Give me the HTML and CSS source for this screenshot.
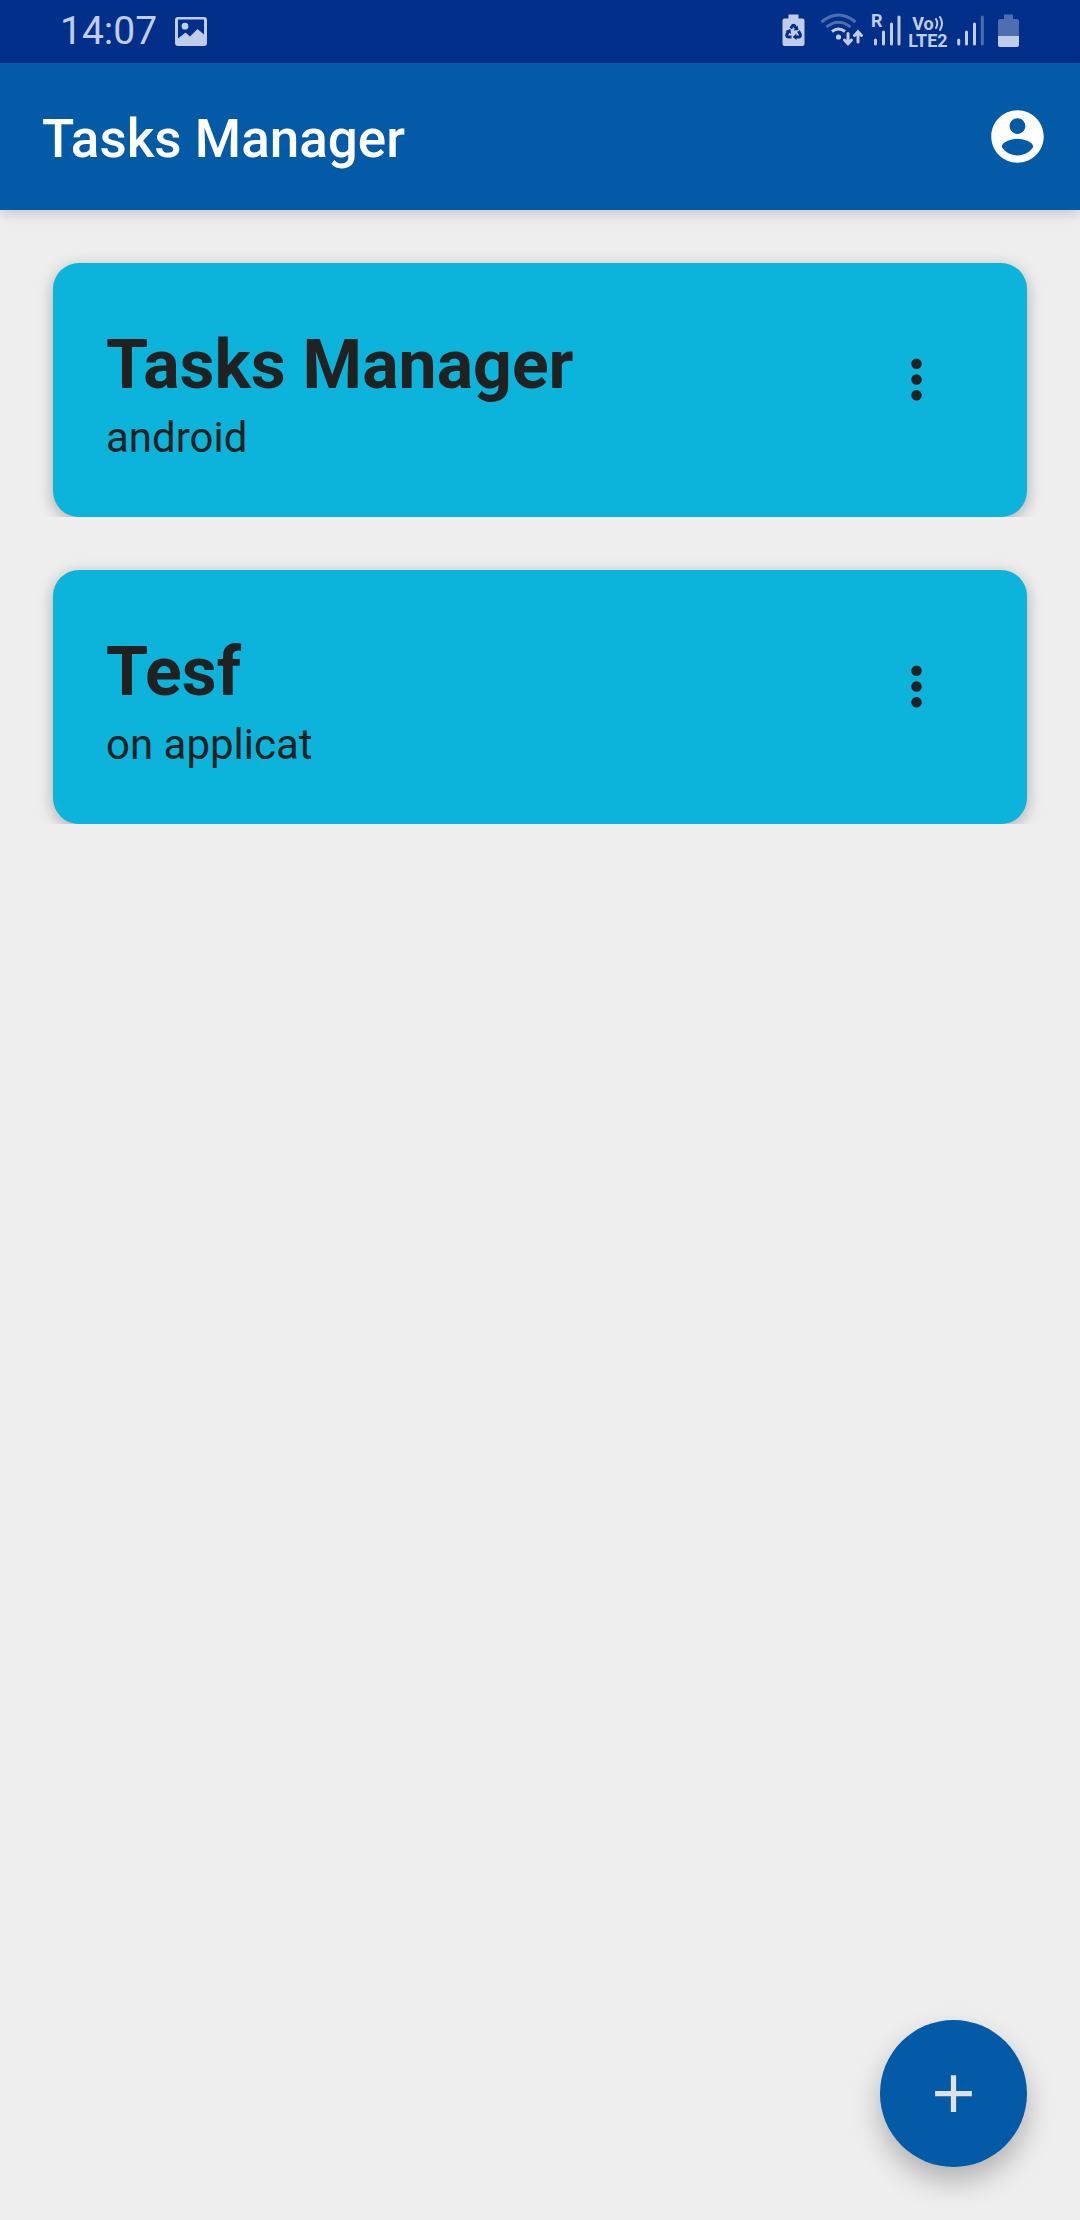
FILE: index.html
```html
<!DOCTYPE html>
<html lang="en">
<head>
<meta charset="utf-8">
<meta name="viewport" content="width=device-width, initial-scale=1">
<title>Tasks Manager</title>
<link rel="stylesheet" href="styles.css">
</head>
<body>
<div class="status-bar">
  <div class="status-left">
    <time class="clock">14:07</time>
    <svg class="picture-icon" width="32" height="30" viewBox="0 0 32 30" aria-hidden="true">
      <path fill="currentColor" fill-rule="evenodd" d="M3 0H29A3 3 0 0 1 32 3V26A3 3 0 0 1 29 29H3A3 3 0 0 1 0 26V3A3 3 0 0 1 3 0ZM3 2.500V21.500L10.500 15.500L15 19.500L22.500 12L29 17.500V2.500ZM10 5.800A3.400 3.400 0 1 1 10 12.600A3.400 3.400 0 1 1 10 5.800Z"/>
    </svg>
  </div>
  <div class="status-right">
    <svg width="30" height="63" viewBox="781 0 30 63" aria-hidden="true">
      <path fill="currentColor" d="M788.500 14.500H798.500V18.500H802.500Q804.500 18.500 804.500 20.500V44Q804.500 46 802.500 46H784.500Q782.500 46 782.500 44V20.500Q782.500 18.500 784.500 18.500H788.500Z"/>
      <g class="recycle">
        <path d="M790.800 28.500L792.300 26Q793.500 24.500 794.700 26L796.200 28.500"/>
        <path d="M798.500 31L800.300 34.500Q800.800 36.800 798.500 37H796"/>
        <path d="M791.500 37H788.500Q786.200 36.800 786.800 34.500L788.500 31"/>
        <path class="recycle-tip" d="M793.500 30.500L798.500 30L797.500 25.500ZM796.500 33.500V40L792.700 37ZM785.500 31L790.500 29L791 34Z"/>
      </g>
    </svg>
    <svg width="46" height="63" viewBox="817 0 46 63" aria-hidden="true">
      <g class="wave">
        <path class="dim" d="M821.500 22Q838.500 8 855.500 22"/>
        <path class="dim" d="M826.500 27Q838.500 17.500 850.500 27"/>
        <path d="M832 31.500Q838.500 26.500 845 31.500"/>
      </g>
      <circle cx="838.500" cy="37" r="2.600" fill="currentColor"/>
      <g class="arrow">
        <path d="M848 33.500V43.500M844.500 40L848 43.700L851.500 40"/>
        <path d="M858 42V32M854.500 35.500L858 31.800L861.500 35.500"/>
      </g>
    </svg>
    <svg width="32" height="63" viewBox="869 0 32 63" aria-hidden="true">
      <text class="roaming" x="871" y="27">R</text>
      <path class="bars" d="M875.500 40V44M883.500 32V44M891.500 24V44M899 17V44"/>
    </svg>
    <div class="volte">
      <span class="volte-line">Vo<svg width="10" height="16" viewBox="0 0 10 16" aria-hidden="true"><path class="sound" d="M2 4Q4.500 8.500 2 13M6 2Q10 8.500 6 15"/></svg></span>
      <span class="volte-line">LTE2</span>
    </div>
    <svg width="34" height="63" viewBox="955 0 34 63" aria-hidden="true">
      <path class="bars" d="M958.700 40V44M966.500 32V44M974.500 24V44"/>
      <path class="bars dim" d="M982.300 17V44"/>
    </svg>
    <svg width="25" height="63" viewBox="995 0 25 63" aria-hidden="true">
      <path class="dim" fill="currentColor" d="M1004 14.500H1013V19H1017Q1019 19 1019 21V36H998V21Q998 19 1000 19H1004Z"/>
      <path fill="currentColor" d="M998 36H1019V45Q1019 47 1017 47H1000Q998 47 998 45Z"/>
    </svg>
  </div>
</div>

<header class="app-bar">
  <h1 class="app-title">Tasks Manager</h1>
  <button class="icon-button" type="button" aria-label="Account">
    <svg width="63" height="63" viewBox="0 0 24 24" aria-hidden="true"><path fill="currentColor" d="M12 2C6.480 2 2 6.480 2 12s4.480 10 10 10 10-4.480 10-10S17.520 2 12 2zm0 3c1.660 0 3 1.340 3 3s-1.340 3-3 3-3-1.340-3-3 1.340-3 3-3zm0 14.200c-2.500 0-4.710-1.280-6-3.220.030-1.990 4-3.080 6-3.080 1.990 0 5.970 1.090 6 3.080-1.290 1.940-3.500 3.220-6 3.220z"/></svg>
  </button>
</header>

<main class="task-list">
  <article class="card">
    <div class="card-text">
      <h2 class="card-title">Tasks Manager</h2>
      <p class="card-detail">android</p>
    </div>
    <button class="icon-button" type="button" aria-label="More options for Tasks Manager">
      <svg width="63" height="63" viewBox="0 0 24 24" aria-hidden="true"><g fill="currentColor"><circle cx="12" cy="6" r="2"/><circle cx="12" cy="12" r="2"/><circle cx="12" cy="18" r="2"/></g></svg>
    </button>
  </article>
  <article class="card">
    <div class="card-text">
      <h2 class="card-title">Tesf</h2>
      <p class="card-detail">on applicat</p>
    </div>
    <button class="icon-button" type="button" aria-label="More options for Tesf">
      <svg width="63" height="63" viewBox="0 0 24 24" aria-hidden="true"><g fill="currentColor"><circle cx="12" cy="6" r="2"/><circle cx="12" cy="12" r="2"/><circle cx="12" cy="18" r="2"/></g></svg>
    </button>
  </article>
</main>

<button class="fab" type="button" aria-label="Add task">
  <svg width="63" height="63" viewBox="0 0 24 24" aria-hidden="true"><path fill="currentColor" d="M19 13h-6v6h-2v-6H5v-2h6V5h2v6h6v2z"/></svg>
</button>
</body>
</html>
```
FILE: styles.css
```css
* {
  box-sizing: border-box;
}

body {
  margin: 0;
  min-height: 100vh;
  background: #eeeeee;
  color: #202221;
  font-family: Roboto, "Liberation Sans", sans-serif;
}

h1,
h2,
p {
  margin: 0;
}

svg {
  display: block;
  flex: none;
}

button {
  padding: 0;
  border: 0;
  background: none;
  color: inherit;
  font: inherit;
  cursor: pointer;
}

/* System status bar */
.status-bar {
  display: flex;
  justify-content: space-between;
  height: 63px;
  padding: 0 60px;
  background: #022f8a;
  color: #c0cce8;
}

.status-left,
.status-right {
  display: flex;
  align-items: center;
}

.status-left {
  gap: 18px;
}

.status-right {
  gap: 6px;
}

.clock {
  font-size: 39px;
  line-height: 63px;
}

.dim {
  opacity: 0.4;
}

.recycle {
  fill: none;
  stroke: #022f8a;
  stroke-width: 3;
}

.recycle-tip {
  fill: #022f8a;
  stroke: none;
}

.wave,
.arrow,
.bars,
.sound {
  fill: none;
  stroke: currentColor;
  stroke-width: 3;
  stroke-linecap: round;
}

.wave {
  stroke-linecap: butt;
}

.sound {
  stroke-width: 2;
}

.roaming {
  fill: currentColor;
  font-size: 18px;
  font-weight: 700;
}

.volte {
  display: flex;
  flex-direction: column;
  align-items: center;
  width: 42px;
  font-size: 18px;
  font-weight: 700;
  line-height: 17px;
}

.volte-line {
  display: flex;
}

/* App bar */
.app-bar {
  position: relative;
  display: flex;
  align-items: center;
  justify-content: space-between;
  min-height: 147px;
  padding-left: 42px;
  background: #035aa6;
  color: #ffffff;
  box-shadow: 0 4px 12px rgba(0, 0, 0, 0.16);
}

.app-title {
  padding-top: 4px;
  font-size: 53px;
  font-weight: 500;
  line-height: 62px;
}

.icon-button {
  display: grid;
  place-items: center;
  flex: none;
  width: 126px;
  height: 126px;
}

/* Task cards */
.task-list {
  display: grid;
  gap: 53px;
  padding: 53px;
}

.card {
  display: flex;
  align-items: flex-start;
  justify-content: space-between;
  padding: 53px 48px 52px 53px;
  border-radius: 26px;
  background: #0cb3da;
  box-shadow: 0 4px 16px rgba(0, 0, 0, 0.28);
  clip-path: inset(-24px -24px 0 -24px);
}

.card-text {
  padding-top: 3px;
}

.card-title {
  font-size: 68px;
  font-weight: 700;
  line-height: 92px;
}

.card-detail {
  font-size: 42px;
  line-height: 54px;
}

/* Floating action button */
.fab {
  position: fixed;
  right: 53px;
  bottom: 53px;
  display: grid;
  place-items: center;
  width: 147px;
  height: 147px;
  border-radius: 50%;
  background: #035aa6;
  color: #dfe1e3;
  box-shadow: 0 14px 28px rgba(0, 0, 0, 0.26);
}
```
